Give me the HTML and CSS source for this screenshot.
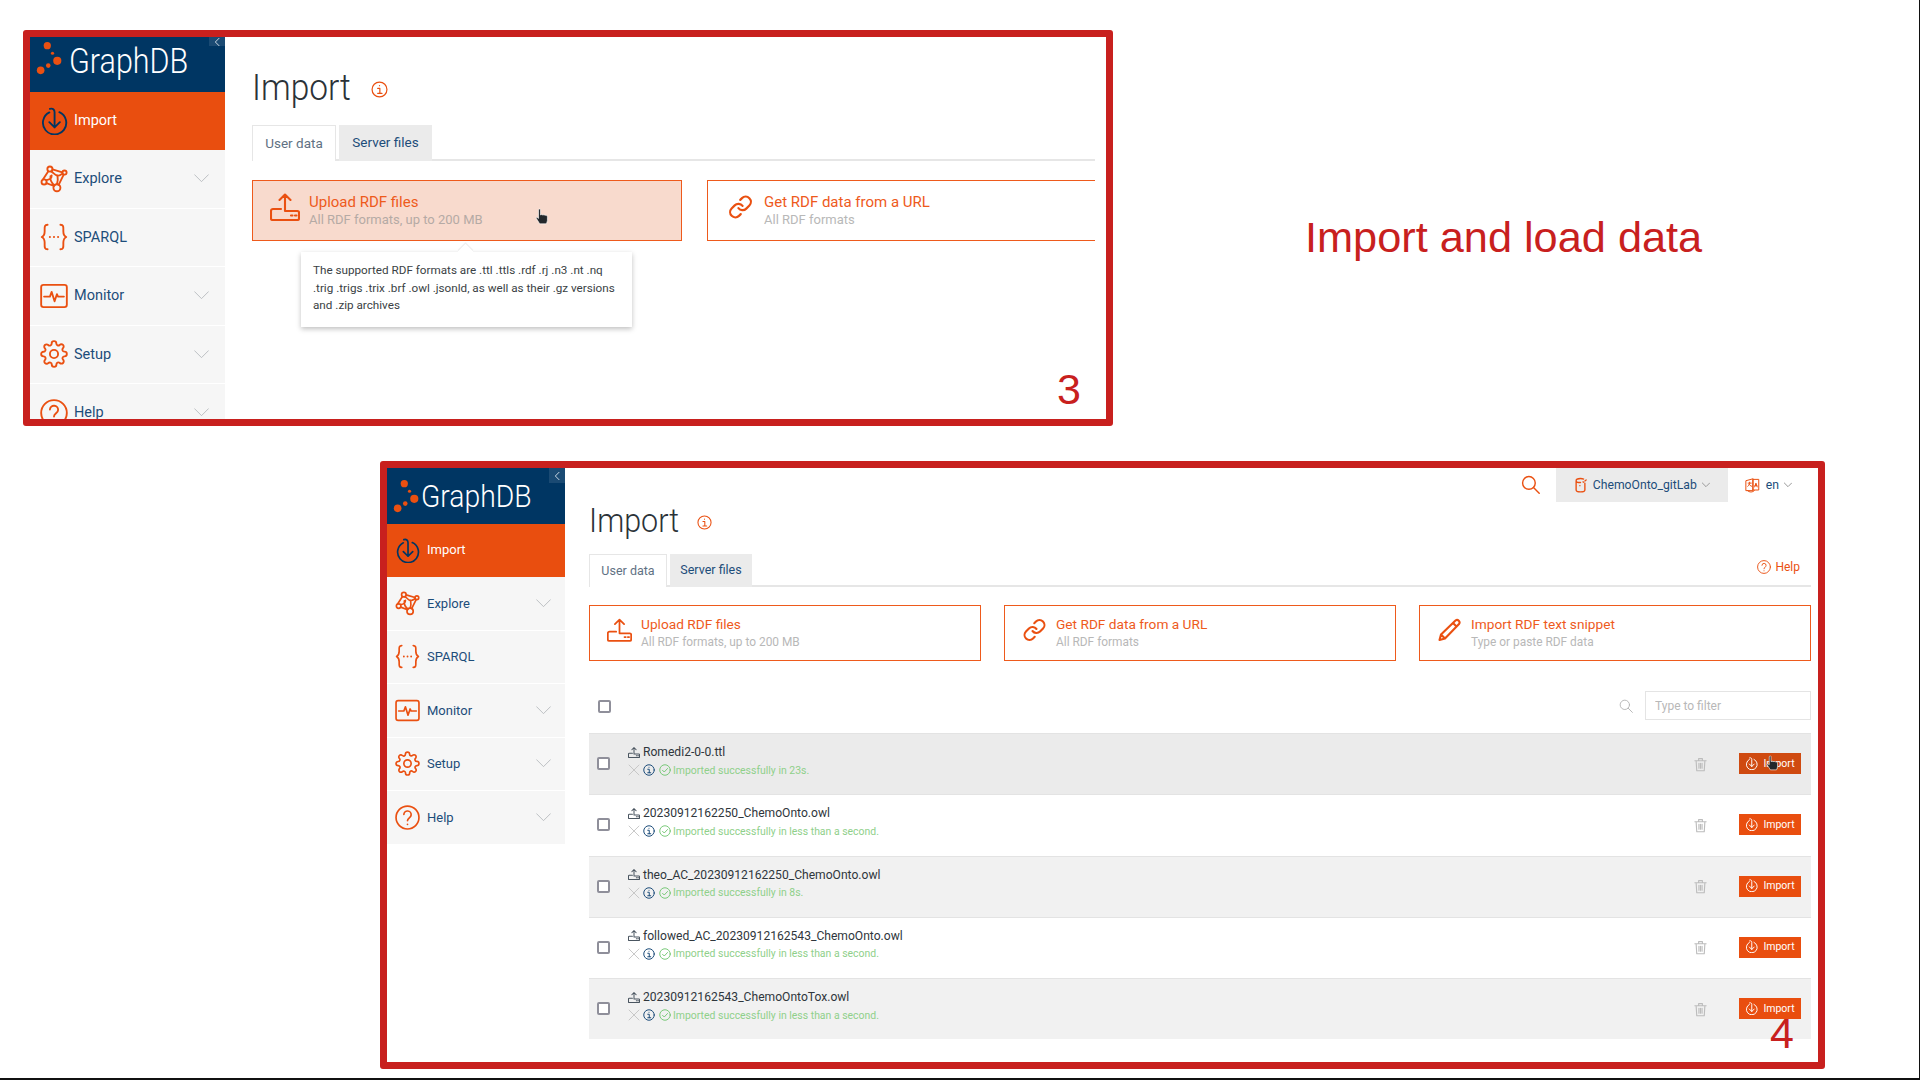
FILE: index.html
```html
<!DOCTYPE html>
<html lang="en">
  <head>
    <meta charset="UTF-8">
    <title>Import and load data</title>
    <link rel="stylesheet" href="styles.css">
  </head>
  <body>

    <svg class="icon-defs" aria-hidden="true">
      <symbol id="i-import" viewBox="0 0 24 24"><path d="M8 4.6a10 10 0 1 0 8.6-.2M8.500 1.600c2.500-.8 4 .6 4 3V17.500M8 13l4.500 4.500L17 13"/></symbol>
      <symbol id="i-explore" viewBox="0 0 24 24"><circle cx="8.500" cy="3.500" r="2.200"/><circle cx="21" cy="6.500" r="1.800"/><circle cx="3.500" cy="14.500" r="2.200"/><circle cx="14.500" cy="19.500" r="3"/><path d="M7 5.500 2.500 12.500M5.500 15.500l6.500 2.500M10.700 3.700l8.500 2.600M20.300 8.200 16 17M9.500 5.500c2 1 3 3 5 3.500s3-.5 4.500-1.500M5.500 13c3-.5 4.500-2 4.500-4M9 9.500c-.5 3 1 6 3.500 8M15 9c.5 3 .5 5-.5 7.500"/></symbol>
      <symbol id="i-sparql" viewBox="0 0 24 24"><path d="M6.500 1.500C3.500 1.500 4 4 4 7c0 3-.5 4-2.500 5C3.500 13 4 14 4 17c0 3-.5 5.500 2.500 5.500M17.500 1.500c3 0 2.500 2.500 2.500 5.500 0 3 .5 4 2.500 5-2 1-2.500 2-2.500 5 0 3 .5 5.500-2.500 5.500"/><circle class="dot" cx="8.500" cy="12" r=".9"/><circle class="dot" cx="12" cy="12" r=".9"/><circle class="dot" cx="15.500" cy="12" r=".9"/></symbol>
      <symbol id="i-monitor" viewBox="0 0 24 24"><rect x="1" y="2.500" width="22" height="19" rx="2"/><path d="M3.500 12.500h5l1.500-4 2.500 8 2-6 1 2h5"/></symbol>
      <symbol id="i-setup" viewBox="0 0 24 24"><circle cx="12" cy="12" r="3.500"/><path d="M19.400 15a1.650 1.650 0 0 0 .33 1.820l.06.06a2 2 0 0 1 0 2.830 2 2 0 0 1-2.830 0l-.06-.06a1.650 1.650 0 0 0-1.820-.33 1.650 1.650 0 0 0-1 1.510V21a2 2 0 0 1-2 2 2 2 0 0 1-2-2v-.09A1.650 1.650 0 0 0 9 19.400a1.650 1.650 0 0 0-1.820.33l-.06.06a2 2 0 0 1-2.830 0 2 2 0 0 1 0-2.830l.06-.06a1.650 1.650 0 0 0 .33-1.820 1.650 1.650 0 0 0-1.510-1H3a2 2 0 0 1-2-2 2 2 0 0 1 2-2h.09A1.650 1.650 0 0 0 4.600 9a1.650 1.650 0 0 0-.33-1.820l-.06-.06a2 2 0 0 1 0-2.830 2 2 0 0 1 2.830 0l.06.06a1.650 1.650 0 0 0 1.820.33H9a1.650 1.650 0 0 0 1-1.510V3a2 2 0 0 1 2-2 2 2 0 0 1 2 2v.09a1.650 1.650 0 0 0 1 1.510 1.650 1.650 0 0 0 1.820-.33l.06-.06a2 2 0 0 1 2.830 0 2 2 0 0 1 0 2.830l-.06.06a1.650 1.650 0 0 0-.33 1.820V9a1.650 1.650 0 0 0 1.510 1H21a2 2 0 0 1 2 2 2 2 0 0 1-2 2h-.09a1.650 1.650 0 0 0-1.510 1z"/></symbol>
      <symbol id="i-help" viewBox="0 0 24 24"><circle cx="12" cy="12" r="11"/><path d="M8.500 9a3.500 3.500 0 0 1 7 .5c0 2.500-3.500 3-3.500 5.500M12 18.500v.1"/></symbol>
      <symbol id="i-info" viewBox="0 0 24 24"><circle cx="12" cy="12" r="10.500"/><path d="M12 6.500v.1M9.500 10.500H12.500V17.500M9.500 17.500h6"/></symbol>
      <symbol id="i-chevron" viewBox="0 0 24 24"><path d="M1 6l11 11L23 6"/></symbol>
      <symbol id="i-upload" viewBox="0 0 30 28"><path d="M11 16H3a2 2 0 0 0-2 2v7.500A1.500 1.500 0 0 0 2.500 27h25a1.500 1.500 0 0 0 1.500-1.500v-6a1.500 1.500 0 0 0-1.500-1.500H15M15 18V1.500M9.500 7 15 1.500 20.500 7M21 22.500h1.500M25 22.500h1.500"/></symbol>
      <symbol id="i-link" viewBox="0 0 24 24"><path d="M10 13a5 5 0 0 0 7.540.54l3-3a5 5 0 0 0-7.070-7.070l-1.720 1.710M14 11a5 5 0 0 0-7.540-.54l-3 3a5 5 0 0 0 7.070 7.070l1.710-1.710"/></symbol>
      <symbol id="i-pencil" viewBox="0 0 24 24"><path d="M18 2.500a2.500 2.500 0 0 1 3.500 3.500L7.500 20.500 2 22l1.500-5.500zM15.500 5l3.500 3.500M3.500 16.500l4 4"/></symbol>
      <symbol id="i-search" viewBox="0 0 24 24"><circle cx="10" cy="10" r="8"/><path d="M15.800 15.800 23 23"/></symbol>
      <symbol id="i-db" viewBox="0 0 24 24"><path d="M5 5v15c0 2 3 3 7 3s7-1 7-3V9M5 5c0-2 3-3.500 7-3.500 2 0 3.500.3 5 1M5 5c0 2 3 3 7 3M16 7l1 .5M11 13h.1M21 4l-2 1.500"/></symbol>
      <symbol id="i-lang" viewBox="0 0 24 24"><path class="fill" d="M13 3h9v17h-9z"/><path d="M2 5l11-3v19H2zM5 9h5M7.500 7.500c0 3-1 5-3 6.500M6.500 11c1 1.500 2.500 2.500 4 3M4 21c3 3 8 3 11 0"/><path class="cut" d="M15.500 15l2-6 2 6M16 13h3"/></symbol>
      <symbol id="i-trash" viewBox="0 0 24 24"><path d="M3 6h18M9 5.500V2.500h6v3M5 6l1 16h12l1-16M9.500 10v8M12 10v8M14.500 10v8"/></symbol>
      <symbol id="i-close" viewBox="0 0 24 24"><path d="M3 3l18 18M21 3 3 21"/></symbol>
      <symbol id="i-check" viewBox="0 0 24 24"><circle cx="12" cy="12" r="10.500"/><path d="M7 12.500l3.500 3.500L17 9"/></symbol>
      <symbol id="i-hand" viewBox="0 0 18 22"><path d="M5 1.500c1-.8 2 0 2 1V9l1.500-.5 1.500.5 1.500-.2 1.500.5 1.500.2c1 .5 1.500 1 1.500 2.500v4c0 2-1 3-1.500 4.500H6L2 14c-.8-1-.5-2 .5-2l2 1.500V2.500z"/></symbol>
      <symbol id="i-logo" viewBox="0 0 40 34"><circle cx="14" cy="4" r="3.800"/><circle cx="19.500" cy="12" r="1.700"/><circle cx="24.500" cy="20" r="4.300"/><circle cx="15" cy="25" r="2.400"/><circle cx="7" cy="30" r="4"/></symbol>
    </svg>

    <main class="slide">

      <section class="frame frame-a">
        <nav class="sidebar">
          <div class="logo">
            <svg class="logo-dots"><use href="#i-logo"/></svg>
            <span class="logo-text">GraphDB</span>
            <span class="collapse"><svg class="ico"><use href="#i-chevron"/></svg></span>
          </div>
          <div class="nav-row nav-active"><svg class="ico nav-ico"><use href="#i-import"/></svg><span>Import</span></div>
          <div class="nav-row"><svg class="ico nav-ico"><use href="#i-explore"/></svg><span>Explore</span><svg class="ico nav-arrow"><use href="#i-chevron"/></svg></div>
          <div class="nav-row"><svg class="ico nav-ico"><use href="#i-sparql"/></svg><span>SPARQL</span></div>
          <div class="nav-row"><svg class="ico nav-ico"><use href="#i-monitor"/></svg><span>Monitor</span><svg class="ico nav-arrow"><use href="#i-chevron"/></svg></div>
          <div class="nav-row"><svg class="ico nav-ico"><use href="#i-setup"/></svg><span>Setup</span><svg class="ico nav-arrow"><use href="#i-chevron"/></svg></div>
          <div class="nav-row"><svg class="ico nav-ico"><use href="#i-help"/></svg><span>Help</span><svg class="ico nav-arrow"><use href="#i-chevron"/></svg></div>
        </nav>
        <div class="content">
          <header class="page-head">
            <h1>Import</h1>
            <svg class="ico head-info"><use href="#i-info"/></svg>
          </header>
          <div class="tabs">
            <span class="tab tab-on">User data</span>
            <span class="tab">Server files</span>
          </div>
          <div class="cards">
            <div class="card card-hover">
              <span class="card-ico"><svg class="ico"><use href="#i-upload"/></svg></span>
              <div><div class="card-title">Upload RDF files</div><div class="card-sub">All RDF formats, up to 200 MB</div></div>
              <svg class="hand hand-card"><use href="#i-hand"/></svg>
              <div class="tip">The supported RDF formats are .ttl .ttls .rdf .rj .n3 .nt .nq .trig .trigs .trix .brf .owl .jsonld, as well as their .gz versions and .zip archives</div>
            </div>
            <div class="card card-open">
              <span class="card-ico"><svg class="ico"><use href="#i-link"/></svg></span>
              <div><div class="card-title">Get RDF data from a URL</div><div class="card-sub">All RDF formats</div></div>
            </div>
          </div>
        </div>
        <span class="step">3</span>
      </section>

      <h2 class="slide-title">Import and load data</h2>

      <section class="frame frame-b">
        <nav class="sidebar">
          <div class="logo">
            <svg class="logo-dots"><use href="#i-logo"/></svg>
            <span class="logo-text">GraphDB</span>
            <span class="collapse"><svg class="ico"><use href="#i-chevron"/></svg></span>
          </div>
          <div class="nav-row nav-active"><svg class="ico nav-ico"><use href="#i-import"/></svg><span>Import</span></div>
          <div class="nav-row"><svg class="ico nav-ico"><use href="#i-explore"/></svg><span>Explore</span><svg class="ico nav-arrow"><use href="#i-chevron"/></svg></div>
          <div class="nav-row"><svg class="ico nav-ico"><use href="#i-sparql"/></svg><span>SPARQL</span></div>
          <div class="nav-row"><svg class="ico nav-ico"><use href="#i-monitor"/></svg><span>Monitor</span><svg class="ico nav-arrow"><use href="#i-chevron"/></svg></div>
          <div class="nav-row"><svg class="ico nav-ico"><use href="#i-setup"/></svg><span>Setup</span><svg class="ico nav-arrow"><use href="#i-chevron"/></svg></div>
          <div class="nav-row"><svg class="ico nav-ico"><use href="#i-help"/></svg><span>Help</span><svg class="ico nav-arrow"><use href="#i-chevron"/></svg></div>
        </nav>
        <div class="content">
          <header class="page-head">
            <h1>Import</h1>
            <svg class="ico head-info"><use href="#i-info"/></svg>
            <div class="tools">
              <svg class="ico tool-search"><use href="#i-search"/></svg>
              <div class="repo"><svg class="ico"><use href="#i-db"/></svg><span>ChemoOnto_gitLab</span><svg class="ico tool-arrow"><use href="#i-chevron"/></svg></div>
              <div class="lang"><svg class="ico"><use href="#i-lang"/></svg><span>en</span><svg class="ico tool-arrow"><use href="#i-chevron"/></svg></div>
            </div>
          </header>
          <div class="tabs">
            <span class="tab tab-on">User data</span>
            <span class="tab">Server files</span>
            <span class="tabs-help"><svg class="ico"><use href="#i-help"/></svg>Help</span>
          </div>
          <div class="cards">
            <div class="card">
              <span class="card-ico"><svg class="ico"><use href="#i-upload"/></svg></span>
              <div><div class="card-title">Upload RDF files</div><div class="card-sub">All RDF formats, up to 200 MB</div></div>
            </div>
            <div class="card">
              <span class="card-ico"><svg class="ico"><use href="#i-link"/></svg></span>
              <div><div class="card-title">Get RDF data from a URL</div><div class="card-sub">All RDF formats</div></div>
            </div>
            <div class="card">
              <span class="card-ico"><svg class="ico"><use href="#i-pencil"/></svg></span>
              <div><div class="card-title">Import RDF text snippet</div><div class="card-sub">Type or paste RDF data</div></div>
            </div>
          </div>
          <div class="filter-bar">
            <input type="checkbox" class="check check-all">
            <svg class="ico filter-ico"><use href="#i-search"/></svg>
            <input type="text" class="filter" placeholder="Type to filter">
          </div>
          <div class="files">
            <div class="file file-hover">
              <input type="checkbox" class="check">
              <div class="file-main">
                <div class="file-name"><svg class="ico"><use href="#i-upload"/></svg>Romedi2-0-0.ttl</div>
                <div class="file-status"><svg class="ico st-x"><use href="#i-close"/></svg><svg class="ico st-i"><use href="#i-info"/></svg><svg class="ico st-ok"><use href="#i-check"/></svg>Imported successfully in 23s.</div>
              </div>
              <svg class="ico trash"><use href="#i-trash"/></svg>
              <span class="btn-import"><svg class="ico"><use href="#i-import"/></svg>Import</span>
              <svg class="hand hand-btn"><use href="#i-hand"/></svg>
            </div>
            <div class="file">
              <input type="checkbox" class="check">
              <div class="file-main">
                <div class="file-name"><svg class="ico"><use href="#i-upload"/></svg>20230912162250_ChemoOnto.owl</div>
                <div class="file-status"><svg class="ico st-x"><use href="#i-close"/></svg><svg class="ico st-i"><use href="#i-info"/></svg><svg class="ico st-ok"><use href="#i-check"/></svg>Imported successfully in less than a second.</div>
              </div>
              <svg class="ico trash"><use href="#i-trash"/></svg>
              <span class="btn-import"><svg class="ico"><use href="#i-import"/></svg>Import</span>
            </div>
            <div class="file">
              <input type="checkbox" class="check">
              <div class="file-main">
                <div class="file-name"><svg class="ico"><use href="#i-upload"/></svg>theo_AC_20230912162250_ChemoOnto.owl</div>
                <div class="file-status"><svg class="ico st-x"><use href="#i-close"/></svg><svg class="ico st-i"><use href="#i-info"/></svg><svg class="ico st-ok"><use href="#i-check"/></svg>Imported successfully in 8s.</div>
              </div>
              <svg class="ico trash"><use href="#i-trash"/></svg>
              <span class="btn-import"><svg class="ico"><use href="#i-import"/></svg>Import</span>
            </div>
            <div class="file">
              <input type="checkbox" class="check">
              <div class="file-main">
                <div class="file-name"><svg class="ico"><use href="#i-upload"/></svg>followed_AC_20230912162543_ChemoOnto.owl</div>
                <div class="file-status"><svg class="ico st-x"><use href="#i-close"/></svg><svg class="ico st-i"><use href="#i-info"/></svg><svg class="ico st-ok"><use href="#i-check"/></svg>Imported successfully in less than a second.</div>
              </div>
              <svg class="ico trash"><use href="#i-trash"/></svg>
              <span class="btn-import"><svg class="ico"><use href="#i-import"/></svg>Import</span>
            </div>
            <div class="file">
              <input type="checkbox" class="check">
              <div class="file-main">
                <div class="file-name"><svg class="ico"><use href="#i-upload"/></svg>20230912162543_ChemoOntoTox.owl</div>
                <div class="file-status"><svg class="ico st-x"><use href="#i-close"/></svg><svg class="ico st-i"><use href="#i-info"/></svg><svg class="ico st-ok"><use href="#i-check"/></svg>Imported successfully in less than a second.</div>
              </div>
              <svg class="ico trash"><use href="#i-trash"/></svg>
              <span class="btn-import"><svg class="ico"><use href="#i-import"/></svg>Import</span>
            </div>
          </div>
        </div>
        <span class="step">4</span>
      </section>

    </main>

  </body>
</html>
```

FILE: styles.css
```css
* { box-sizing: border-box }
html, body { margin: 0; height: 100% }
body { font-family: Roboto, "Liberation Sans", sans-serif; background: #fff; overflow: hidden }

.icon-defs { position: absolute; width: 0; height: 0 }
.ico { fill: none; stroke: currentColor; stroke-width: 1.6; stroke-linecap: round; stroke-linejoin: round; flex: none; overflow: visible }
.dot { fill: currentColor; stroke: none }

/* the slide: frames are placed freely on it */

.slide { position: relative; width: 1920px; height: 1080px; border-right: 1px solid #111; border-bottom: 2px solid #111 }
.slide-title { position: absolute; left: 1305px; top: 212px; margin: 0; font: 400 43.3px/50px "Liberation Sans", sans-serif; color: #c8201e; white-space: nowrap }

.frame { position: absolute; display: flex; overflow: hidden; background: #fff; border: 7px solid #c8201e; border-radius: 3px }
.frame-a { left: 23px; top: 30px; width: 1090px; height: 396px }
.frame-b { left: 380px; top: 461px; width: 1445px; height: 608px }

.step { position: absolute; font: 400 43px/50px "Liberation Sans", sans-serif; color: #c8201e }
.frame-a .step { left: 1027px; top: 327px }
.frame-b .step { left: 1383px; top: 540px }

/* sidebar */

.sidebar { flex: none; background: #fff }
.frame-a .sidebar { width: 195px }
.frame-b .sidebar { width: 178px }

.logo { position: relative; display: flex; padding-left: 4px; background: #003663; color: #fff; font-weight: 300 }
.frame-a .logo { height: 55px; padding-top: 5px; font-size: 30.500px; line-height: 40px }
.frame-b .logo { height: 56px; padding-top: 11px; font-size: 28.300px; line-height: 36px }
.logo-dots { flex: none; width: 38px; height: 38px; margin-top: -2px; fill: #ea5011 }
.frame-a .logo-dots { margin-right: -3px; margin-top: -3px }
.frame-b .logo-dots { margin-right: -8px }
.logo-text { display: block; transform: scaleY(1.12) }

.collapse { position: absolute; right: 0; top: 0; display: flex; align-items: center; justify-content: center; background: #1a4a73; color: #c9d6e2 }
.frame-a .collapse { width: 16px; height: 9px }
.frame-b .collapse { width: 16px; height: 15px }
.collapse .ico { width: 8px; height: 8px; stroke-width: 3; transform: rotate(90deg) }

.nav-row { display: flex; align-items: center; background: #f6f6f6; color: #1d4d7a; border-bottom: 1px solid #fff }
.nav-row .nav-ico { color: #ea5011 }
.nav-active { background: #e94e0f; color: #fff; border-bottom: 0 }
.nav-active span { margin-bottom: 2px }
.nav-active .nav-ico { color: #003663 }
.nav-arrow { margin-left: auto; width: 15px; height: 15px; color: #b5b8bb; stroke-width: 1.4 }

.frame-a .nav-row { height: 58.500px; padding: 0 16px 0 10px; font-size: 14.500px }
.frame-a .nav-active { height: 58px }
.frame-a .nav-ico { width: 28px; height: 28px; margin-right: 6px }
.frame-b .nav-row { height: 53.500px; padding: 0 14px 0 8px; font-size: 13px }
.frame-b .nav-active { height: 53px }
.frame-b .nav-ico { width: 25px; height: 25px; margin-right: 7px }

/* page head and tabs */

.content { flex: 1; min-width: 0 }
.frame-a .content { padding: 30px 11px 0 27px }
.frame-b .content { padding: 0 7px 0 24px }

.page-head { display: flex; align-items: flex-start }
h1 { margin: 0; font-weight: 300; color: #2b3238; transform: scaleY(1.1) }
.frame-a h1 { font-size: 33.500px; line-height: 42px }
.frame-b h1 { margin-top: 34px; font-size: 30.500px; line-height: 38px }
.head-info { color: #ea5011; stroke-width: 1.7 }
.frame-a .head-info { width: 17px; height: 17px; margin: 14px 0 0 20px }
.frame-b .head-info { width: 15px; height: 15px; margin: 47px 0 0 18px }

.tools { display: flex; align-items: flex-start; margin-left: auto; font-size: 12.200px; color: #1d4d7a }
.tool-search { width: 19px; height: 19px; margin: 7px 16px 0 0; color: #ea5011; stroke-width: 1.8 }
.repo { display: flex; align-items: center; width: 172px; height: 34px; padding-left: 17px; background: #ebebeb }
.repo .ico:first-child { width: 15px; height: 16px; margin-right: 5px; color: #ea5011; stroke-width: 2.200 }
.lang { display: flex; align-items: center; height: 34px; padding: 0 19px 0 17px }
.lang .ico:first-child { width: 15px; height: 16px; margin-right: 6px; color: #ea5011 }
.lang .fill { fill: #ea5011 }
.lang .cut { stroke: #fff }
.tool-arrow { width: 8px; height: 8px; margin-left: 5px; color: #9a9a9a; stroke-width: 3 }

.tabs { display: flex; align-items: flex-end; border-bottom: 2px solid #e6e6e6 }
.frame-a .tabs { margin-top: 16px; height: 36px; font-size: 13.500px }
.frame-b .tabs { margin-top: 14px; height: 33px; font-size: 12.500px }
.tab { display: flex; align-items: center; justify-content: center; height: calc(100% + 2px); margin-bottom: -2px; margin-right: 3px; padding-bottom: 2px; background: #ebebeb; color: #1d4d7a }
.tab-on { background: #fff; color: #5f7183; border: 1px solid #e6e6e6; border-bottom: 0 }
.frame-a .tab { width: 93px }
.frame-a .tab-on { width: 84px }
.frame-b .tab { width: 82px }
.frame-b .tab-on { width: 78px }
.tabs-help { display: flex; align-items: center; gap: 4px; margin: 0 11px 11px auto; font-size: 12px; color: #ea5011 }
.tabs-help .ico { width: 14px; height: 14px }

/* cards */

.cards { display: flex }
.frame-a .cards { margin-top: 19px; gap: 25px }
.frame-b .cards { margin-top: 18px; gap: 23px }

.card { position: relative; display: flex; align-items: center; border: 1.500px solid #ee5a1c; background: #fff; padding-left: 17px }
.frame-a .card { width: 430px; height: 61px }
.frame-a .card-open { width: 388px; border-right: 0 }
.frame-b .card { flex: 1; height: 56px }
.card-hover { background: #f8dacd }
.card-ico { flex: none; display: flex; justify-content: center; color: #ea5011 }
.card-ico .ico { stroke-width: 2.100 }
.frame-a .card-ico { width: 30px; margin-right: 9px }
.frame-b .card-ico { width: 25px; margin-right: 9px }
.frame-a .card-ico .ico { width: 30px; height: 28px; margin-top: -8px }
.frame-a .card-open .ico { width: 25px; height: 26px }
.frame-b .card-ico .ico { width: 25px; height: 24px; margin-top: -7px }
.card-title { color: #ee5a1c }
.card-sub { color: #b8b8b8 }
.frame-a .card-title { font-size: 15px; line-height: 18px }
.frame-a .card-sub { font-size: 13px; line-height: 18px }
.frame-b .card-title { font-size: 13.700px; line-height: 17px }
.frame-b .card-sub { margin-top: 1px; font-size: 11.900px; line-height: 17px }
.card-hover .card-sub { color: #b5aaa5 }

.hand { position: absolute; fill: #23272b; stroke: #fff; stroke-width: .8 }
.hand-card { left: 282px; top: 27px; width: 14px; height: 17px }

.tip { position: absolute; left: 48px; top: 71px; width: 331px; height: 75px; padding: 10px 12px; background: #fff; font-size: 11.700px; line-height: 17.500px; color: #3a3f44; box-shadow: 0 2px 5px rgba(0,0,0,.25) }
.tip::before { content: ""; position: absolute; left: 159px; top: -6px; width: 11px; height: 11px; background: #fff; transform: rotate(45deg); box-shadow: -1px -1px 1px rgba(0,0,0,.08) }

/* file list */

.filter-bar { display: flex; align-items: center; height: 29px; margin-top: 30px }
.check { appearance: none; flex: none; width: 13px; height: 13px; margin: 0; background: #fff; border: 2px solid #8f8f9a; border-radius: 2px }
.check-all { margin: 1px 0 0 9px }
.filter-ico { width: 14px; height: 14px; margin: 0 12px 0 auto; color: #b5b5b5 }
.filter { width: 166px; height: 29px; padding: 0 9px; border: 1.500px solid #e4e4e4; font: 400 12px Roboto, sans-serif; color: #555 }
.filter::placeholder { color: #b8b8b8 }

.files { margin-top: 13px }
.file { position: relative; display: flex; align-items: center; height: 61.250px; padding: 0 10px 0 8px; border-top: 1.500px solid #e3e3e3 }
.file:nth-child(odd) { background: #f1f1f1 }
.file-hover:nth-child(odd) { background: #ebebeb }
.file > .check { margin-bottom: 1px }
.file-main { flex: 1; margin-left: 18px; padding-bottom: 5px }
.file-name { display: flex; align-items: center; gap: 3px; height: 17px; font-size: 12.100px; color: #2f363c }
.file-name .ico { width: 12px; height: 11px; stroke-width: 2.600; color: #4a5560 }
.file-status { display: flex; align-items: center; height: 19px; font-size: 10.450px; color: #8fd08a }
.file-status .ico { width: 12px; height: 12px }
.st-x { color: #c2c2c2; transform: scale(1.1) }
.st-i { margin-left: 3px; color: #1d4d7a; stroke-width: 2 }
.st-ok { margin: 0 2px 0 4px; color: #6cc46c; stroke-width: 1.800 }

.trash { width: 15px; height: 15px; color: #bcbcbc; stroke-width: 1.800 }
.btn-import { display: flex; align-items: center; justify-content: center; gap: 5px; width: 62px; height: 21px; margin: 0 0 1px 31px; padding-bottom: 1px; background: #e94e0f; color: #fff; font-size: 10.500px }
.btn-import .ico { width: 13px; height: 13px; stroke-width: 1.800 }
.file-hover .btn-import { background: #cf4a10 }
.hand-btn { left: 1177px; top: 21px; width: 13px; height: 16px }
```
